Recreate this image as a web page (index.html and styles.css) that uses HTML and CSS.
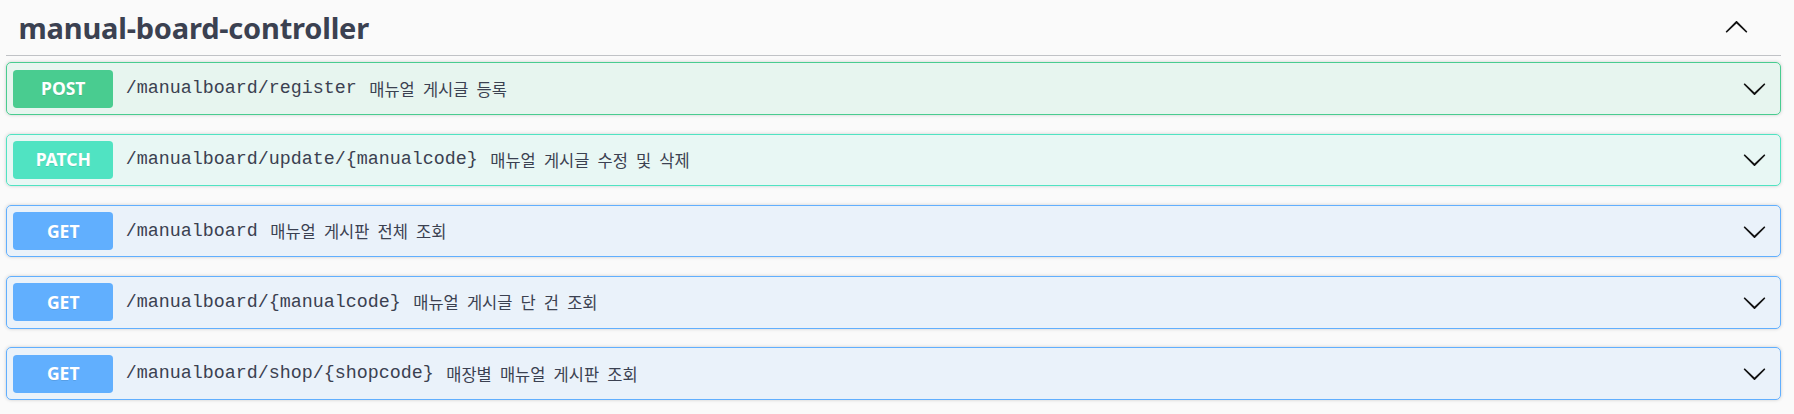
FILE: index.html
```html
<!DOCTYPE html>
<html lang="ko">
<head>
<meta charset="utf-8">
<title>manual-board-controller</title>
<link rel="stylesheet" href="styles.css">
</head>
<body>
<section class="tag-section">
  <h3 class="tag">
    <span class="tag-title">manual-board-controller</span>
    <svg class="tag-arrow" viewBox="0 0 20 20" width="25" height="25"><path d="M17.418 6.109c.272-.268.709-.268.979 0s.271.701 0 .969l-7.908 7.83c-.27.268-.707.268-.979 0l-7.908-7.83c-.27-.268-.27-.701 0-.969.271-.268.709-.268.979 0L10 13.25l7.418-7.141z" transform="matrix(1 0 0 -1 0 20)"/></svg>
  </h3>
  <div class="ops">
    <div class="op op-post">
      <span class="method">POST</span>
      <span class="path">/manualboard/register</span>
      <span class="desc">매뉴얼 게시글 등록</span>
      <svg class="arrow" viewBox="0 0 20 20" width="25" height="25"><path d="M17.418 6.109c.272-.268.709-.268.979 0s.271.701 0 .969l-7.908 7.83c-.27.268-.707.268-.979 0l-7.908-7.830c-.27-.268-.27-.701 0-.969.271-.268.709-.268.979 0L10 13.25l7.418-7.141z"/></svg>
    </div>
    <div class="op op-patch">
      <span class="method">PATCH</span>
      <span class="path">/manualboard/update/{manualcode}</span>
      <span class="desc">매뉴얼 게시글 수정 및 삭제</span>
      <svg class="arrow" viewBox="0 0 20 20" width="25" height="25"><path d="M17.418 6.109c.272-.268.709-.268.979 0s.271.701 0 .969l-7.908 7.83c-.27.268-.707.268-.979 0l-7.908-7.83c-.27-.268-.27-.701 0-.969.271-.268.709-.268.979 0L10 13.25l7.418-7.141z"/></svg>
    </div>
    <div class="op op-get">
      <span class="method">GET</span>
      <span class="path">/manualboard</span>
      <span class="desc">매뉴얼 게시판 전체 조회</span>
      <svg class="arrow" viewBox="0 0 20 20" width="25" height="25"><path d="M17.418 6.109c.272-.268.709-.268.979 0s.271.701 0 .969l-7.908 7.83c-.27.268-.707.268-.979 0l-7.908-7.83c-.27-.268-.27-.701 0-.969.271-.268.709-.268.979 0L10 13.25l7.418-7.141z"/></svg>
    </div>
    <div class="op op-get">
      <span class="method">GET</span>
      <span class="path">/manualboard/{manualcode}</span>
      <span class="desc">매뉴얼 게시글 단 건 조회</span>
      <svg class="arrow" viewBox="0 0 20 20" width="25" height="25"><path d="M17.418 6.109c.272-.268.709-.268.979 0s.271.701 0 .969l-7.908 7.83c-.27.268-.707.268-.979 0l-7.908-7.83c-.27-.268-.27-.701 0-.969.271-.268.709-.268.979 0L10 13.25l7.418-7.141z"/></svg>
    </div>
    <div class="op op-get">
      <span class="method">GET</span>
      <span class="path">/manualboard/shop/{shopcode}</span>
      <span class="desc">매장별 매뉴얼 게시판 조회</span>
      <svg class="arrow" viewBox="0 0 20 20" width="25" height="25"><path d="M17.418 6.109c.272-.268.709-.268.979 0s.271.701 0 .969l-7.908 7.83c-.27.268-.707.268-.979 0l-7.908-7.83c-.27-.268-.27-.701 0-.969.271-.268.709-.268.979 0L10 13.25l7.418-7.141z"/></svg>
    </div>
  </div>
</section>
</body>
</html>
```
FILE: styles.css
```css
html, body {
  margin: 0;
  background: #fafafa;
}
body {
  padding: 0 13px 0 6px;
  font-family: "Noto Sans", "Noto Sans CJK KR", sans-serif;
  color: #3b4151;
}
.tag {
  display: flex;
  align-items: center;
  margin: 0 0 6.25px;
  padding: 12.5px 32px 12.5px 12.5px;
  border-bottom: 1px solid rgba(59, 65, 81, 0.3);
}
.tag-title {
  flex: 1;
  font-family: "Noto Sans", "Noto Sans CJK KR", sans-serif;
  font-weight: 700;
  font-size: 29px;
  letter-spacing: -0.2px;
  line-height: 30px;
  color: #3b4151;
}
.tag-arrow {
  display: block;
  fill: #111;
}
.op {
  display: flex;
  align-items: center;
  margin: 0 0 18.75px;
  padding: 6.25px 13px 6.25px 6.25px;
  border: 1px solid #000;
  border-radius: 5px;
  box-shadow: 0 0 3.75px rgba(0, 0, 0, 0.19);
}
.method {
  min-width: 100px;
  padding: 7.5px 0;
  border-radius: 3.75px;
  font-family: "Noto Sans", sans-serif;
  font-weight: 700;
  font-size: 17.5px;
  line-height: 23px;
  color: #fff;
  text-align: center;
  text-shadow: 0 1px 0 rgba(0, 0, 0, 0.1);
}
.path {
  padding: 0 12.5px;
  font-family: "Liberation Mono", "DejaVu Sans Mono", monospace;
  font-size: 18.33px;
  color: #3b4151;
}
.desc {
  flex: 1;
  font-family: "Noto Sans CJK KR", sans-serif;
  font-size: 16.5px;
  word-spacing: 3.5px;
  color: #3b4151;
}
.arrow {
  display: block;
  fill: #111;
}
.op-post { background: rgba(73, 204, 144, 0.1); border-color: #49cc90; }
.op-post .method { background: #49cc90; }
.op-patch { background: rgba(80, 227, 194, 0.1); border-color: #50e3c2; }
.op-patch .method { background: #50e3c2; }
.op-get { background: rgba(97, 175, 254, 0.1); border-color: #61affe; }
.op-get .method { background: #61affe; }
```
